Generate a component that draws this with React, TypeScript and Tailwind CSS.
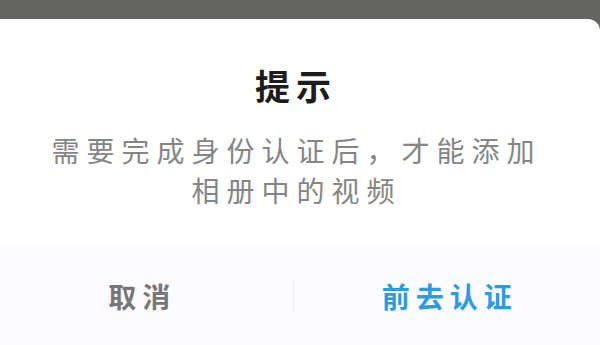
import React from 'react';

const font = { fontFamily: '"Noto Sans CJK SC", "Noto Sans", sans-serif' };

export default function App() {
  return (
    <div className="w-[600px] h-[345px] overflow-hidden bg-[#656662]" style={font}>
      <div className="mt-[19px] ml-[-14px] w-[614px] h-[340px] bg-white rounded-tr-[12px] rounded-br-[12px] flex flex-col">
        {/* Body */}
        <div className="pt-[46px] flex flex-col items-center">
          <h2 className="text-[35px] leading-[40px] font-bold text-[#1c1c1c] tracking-[6px] pl-[6px]">提示</h2>
          <p className="mt-[25px] text-[28px] leading-[40px] text-[#858585] tracking-[7px] pl-[7px] text-center">
            需要完成身份认证后，才能添加
            <br />
            相册中的视频
          </p>
        </div>

        {/* Actions */}
        <div className="mt-[36px] flex-1 bg-[#fcfbfd] flex items-start pt-[33px]">
          <button className="flex-1 h-[34px] text-[28px] leading-[34px] font-semibold text-[#777777] tracking-[6px] pl-[6px]">
            取消
          </button>
          <div className="w-px h-[34px] bg-[#f0eff2]" />
          <button className="flex-1 h-[34px] text-[28px] leading-[34px] font-semibold text-[#2e9be0] tracking-[6px] pl-[6px]">
            前去认证
          </button>
        </div>
      </div>
    </div>
  );
}
